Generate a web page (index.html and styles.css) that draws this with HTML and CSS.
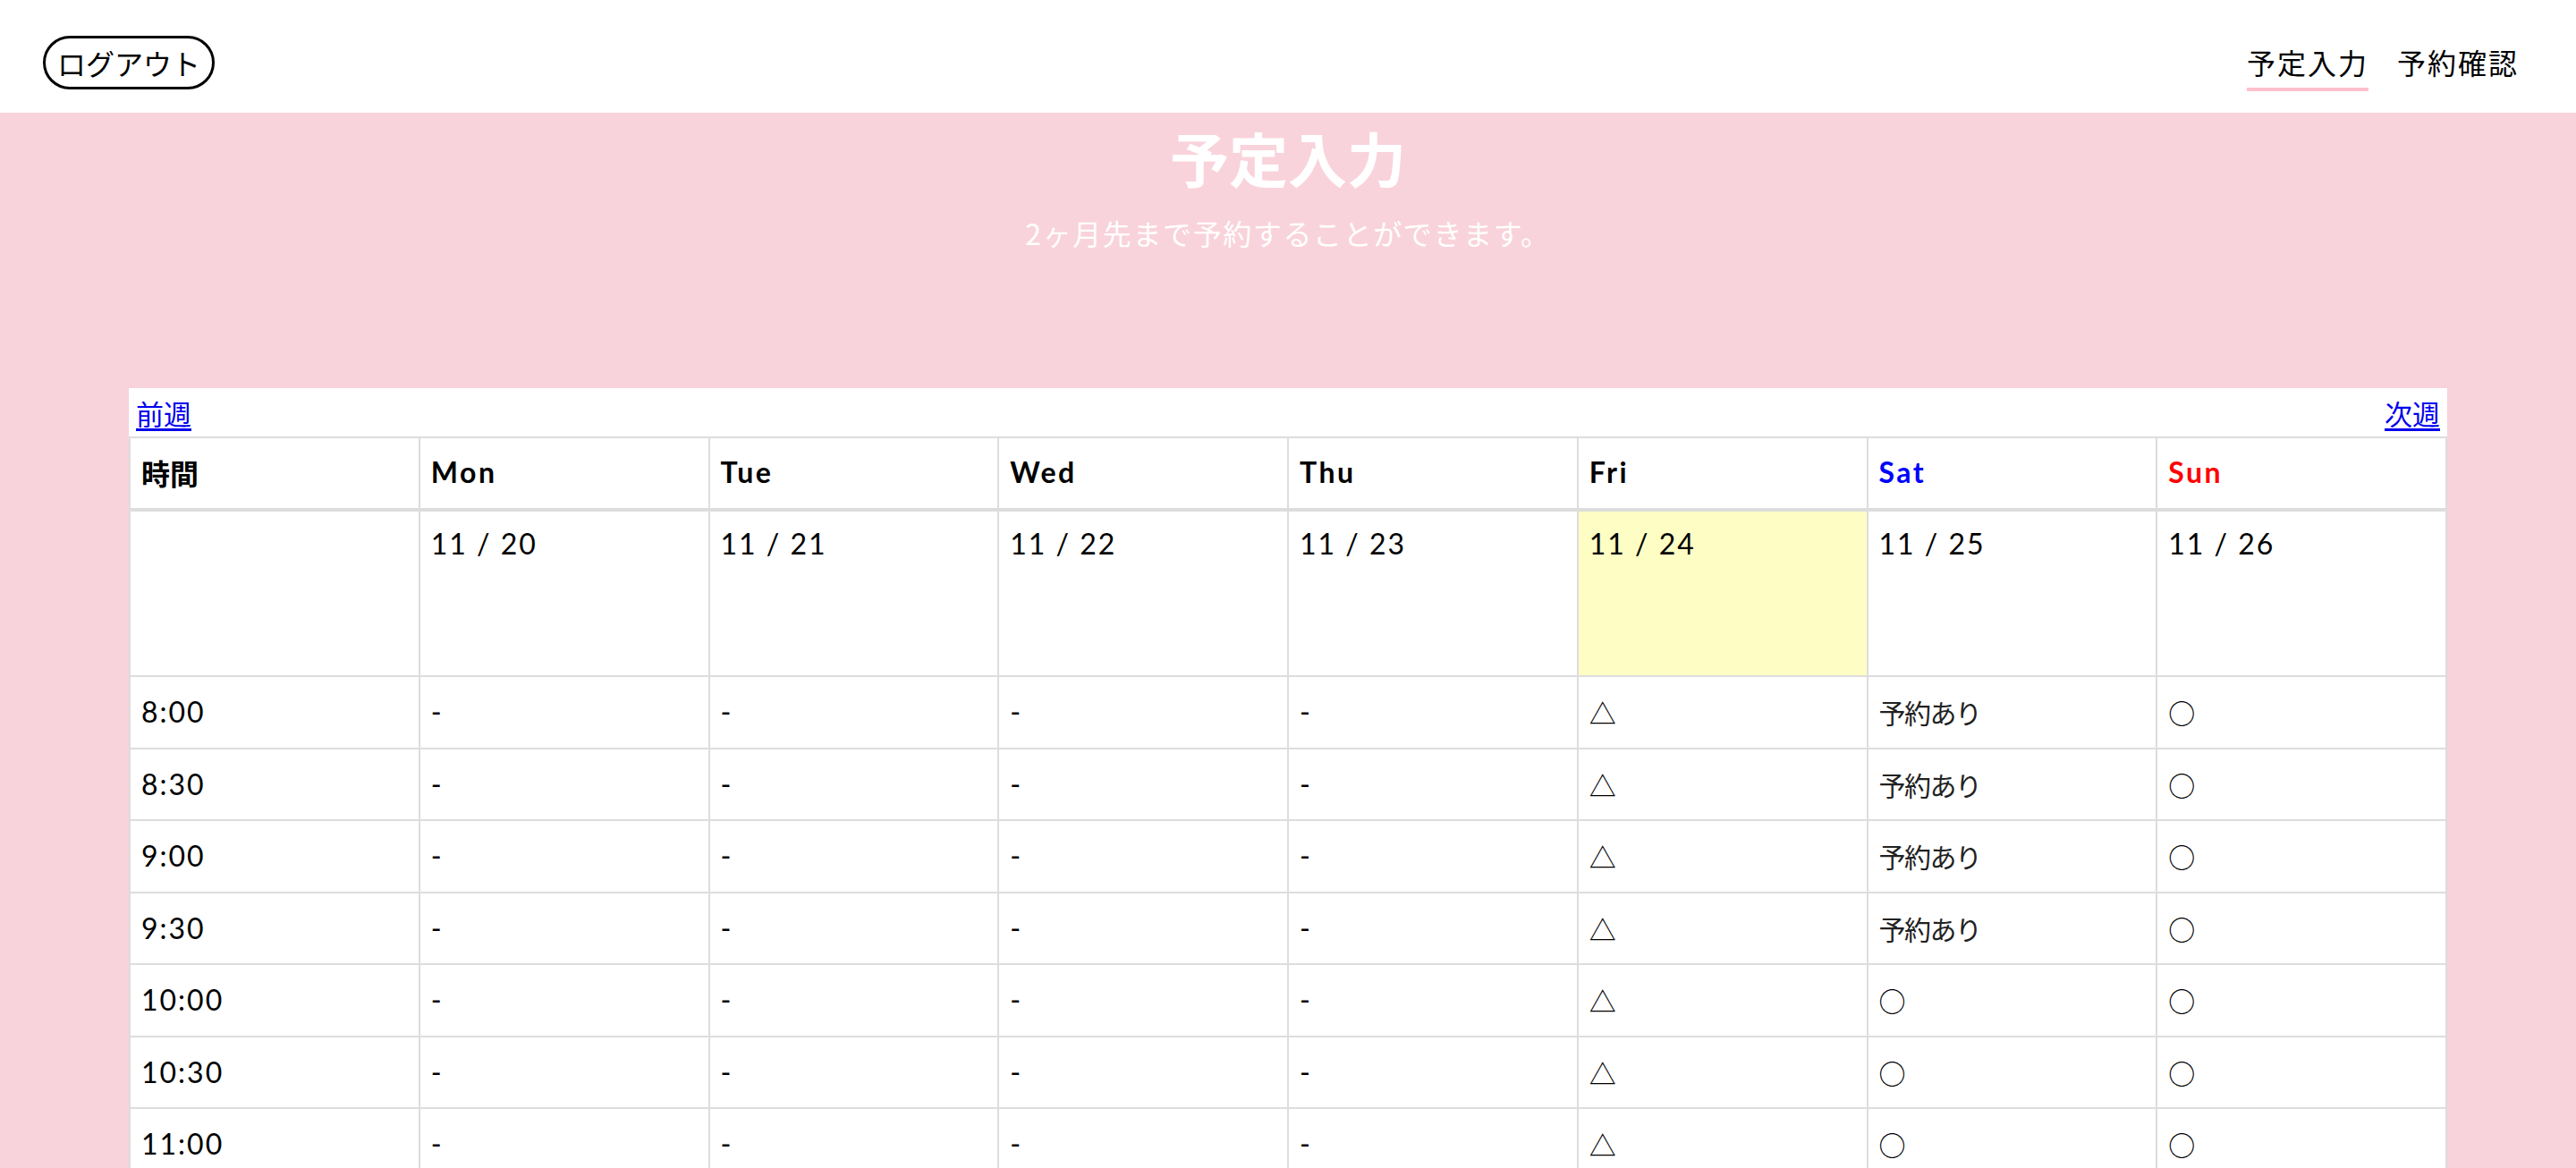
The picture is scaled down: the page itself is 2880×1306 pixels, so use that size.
FILE: index.html
```html
<!DOCTYPE html>
<html lang="ja">
<head>
<meta charset="utf-8">
<title>予定入力</title>
<link rel="stylesheet" href="styles.css">
</head>
<body>
<header class="topbar">
  <button class="logout" type="button">ログアウト</button>
  <nav class="nav">
    <a class="nav-item active" href="#">予定入力</a>
    <a class="nav-item" href="#">予約確認</a>
  </nav>
</header>
<main class="page">
  <section class="hero">
    <h1 class="hero-title">予定入力</h1>
    <p class="hero-sub">2ヶ月先まで予約することができます。</p>
  </section>
  <section class="schedule">
    <div class="weeknav">
      <a class="weeklink" href="#">前週</a>
      <a class="weeklink" href="#">次週</a>
    </div>
    <div class="grid">
      <div class="c h jp">時間</div>
      <div class="c h">Mon</div>
      <div class="c h">Tue</div>
      <div class="c h">Wed</div>
      <div class="c h">Thu</div>
      <div class="c h">Fri</div>
      <div class="c h sat">Sat</div>
      <div class="c h sun">Sun</div>

      <div class="c d"></div>
      <div class="c d">11 / 20</div>
      <div class="c d">11 / 21</div>
      <div class="c d">11 / 22</div>
      <div class="c d">11 / 23</div>
      <div class="c d today">11 / 24</div>
      <div class="c d">11 / 25</div>
      <div class="c d">11 / 26</div>

      <div class="c">8:00</div><div class="c">-</div><div class="c">-</div><div class="c">-</div><div class="c">-</div><div class="c sym">△</div><div class="c booked">予約あり</div><div class="c sym">○</div>
      <div class="c">8:30</div><div class="c">-</div><div class="c">-</div><div class="c">-</div><div class="c">-</div><div class="c sym">△</div><div class="c booked">予約あり</div><div class="c sym">○</div>
      <div class="c">9:00</div><div class="c">-</div><div class="c">-</div><div class="c">-</div><div class="c">-</div><div class="c sym">△</div><div class="c booked">予約あり</div><div class="c sym">○</div>
      <div class="c">9:30</div><div class="c">-</div><div class="c">-</div><div class="c">-</div><div class="c">-</div><div class="c sym">△</div><div class="c booked">予約あり</div><div class="c sym">○</div>
      <div class="c">10:00</div><div class="c">-</div><div class="c">-</div><div class="c">-</div><div class="c">-</div><div class="c sym">△</div><div class="c sym">○</div><div class="c sym">○</div>
      <div class="c">10:30</div><div class="c">-</div><div class="c">-</div><div class="c">-</div><div class="c">-</div><div class="c sym">△</div><div class="c sym">○</div><div class="c sym">○</div>
      <div class="c">11:00</div><div class="c">-</div><div class="c">-</div><div class="c">-</div><div class="c">-</div><div class="c sym">△</div><div class="c sym">○</div><div class="c sym">○</div>
    </div>
  </section>
</main>
</body>
</html>
```

FILE: styles.css
```css
html, body {
  margin: 0;
  padding: 0;
}

body {
  font-family: "Lato", "Noto Sans CJK JP", sans-serif;
  background: #f9d3db;
  color: #000;
}

.topbar {
  display: flex;
  justify-content: space-between;
  align-items: flex-start;
  height: 126px;
  box-sizing: border-box;
  padding: 0 64px 0 48px;
  background: #fff;
}

.logout {
  margin-top: 40px;
  height: 60px;
  box-sizing: border-box;
  border: 3px solid #000;
  border-radius: 30px;
  background: #fff;
  padding: 0 13px;
  font-family: "Noto Sans CJK JP", sans-serif;
  font-size: 32px;
  line-height: 1;
  color: #000;
  display: flex;
  align-items: center;
  cursor: pointer;
}

.nav {
  display: flex;
  gap: 32px;
  margin-top: 53px;
}

.nav-item {
  font-family: "Noto Sans CJK JP", sans-serif;
  font-size: 32px;
  line-height: 32px;
  letter-spacing: 2px;
  padding-bottom: 13px;
  border-bottom: 4px solid transparent;
  color: #000;
  text-decoration: none;
}

.nav-item.active {
  border-bottom-color: #ffc0cb;
}

.hero {
  text-align: center;
  padding-top: 17px;
  color: #fff;
  font-family: "Noto Sans CJK JP", sans-serif;
}

.hero-title {
  margin: 0;
  font-size: 66px;
  line-height: 64px;
  font-weight: 700;
}

.hero-sub {
  margin: 37px 0 0;
  font-size: 32px;
  line-height: 32px;
  letter-spacing: 1.6px;
  font-weight: 400;
}

.schedule {
  width: 90%;
  margin: 158px auto 0;
  background: #fff;
}

.weeknav {
  display: flex;
  justify-content: space-between;
  align-items: center;
  height: 54px;
  padding: 0 8px;
}

.weeklink {
  font-family: "Noto Sans CJK JP", sans-serif;
  font-size: 31px;
  line-height: 1;
  color: #0000ee;
  text-decoration: underline;
  text-underline-offset: 4px;
}

.grid {
  display: grid;
  grid-template-columns: repeat(8, minmax(0, 1fr));
  border-top: 2px solid #ddd;
  border-left: 2px solid #ddd;
}

.c {
  box-sizing: border-box;
  height: 80.5px;
  border-right: 2px solid #ddd;
  border-bottom: 2px solid #ddd;
  display: flex;
  align-items: center;
  padding: 0 12px;
  font-size: 32px;
  line-height: 34px;
  letter-spacing: 2px;
  white-space: nowrap;
}

.h {
  height: 82px;
  border-bottom-width: 4px;
  font-weight: 700;
  letter-spacing: 2.5px;
  padding-bottom: 2px;
}

.jp {
  font-family: "Noto Sans CJK JP", sans-serif;
  letter-spacing: 0;
}

.sat {
  color: #0000ff;
}

.sun {
  color: #ff0000;
}

.d {
  height: 185px;
  align-items: flex-start;
  padding-top: 19px;
}

.today {
  background: #fefdc4;
}

.booked {
  font-family: "Noto Sans CJK JP", sans-serif;
  font-size: 30px;
  letter-spacing: -1.5px;
  color: #222;
}

.sym {
  font-family: "Noto Sans CJK JP", sans-serif;
  font-size: 30px;
  letter-spacing: 0;
}
```
